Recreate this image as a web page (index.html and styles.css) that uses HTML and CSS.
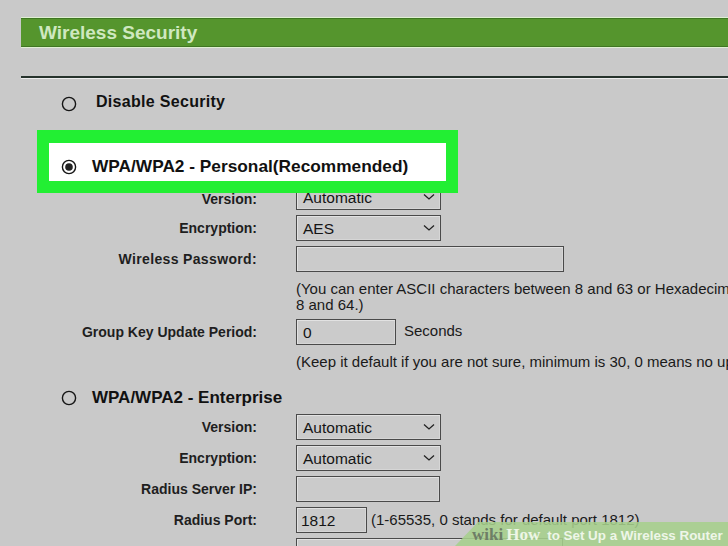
FILE: index.html
```html
<!DOCTYPE html>
<html>
<head>
<meta charset="utf-8">
<link rel="stylesheet" href="styles.css">
</head>
<body>
<div class="page">
  <div class="titlebar">Wireless Security</div>
  <div class="rule"></div>

  <div class="option opt-disable">
    <svg class="radio" width="16" height="16" viewBox="0 0 16 16"><circle cx="8" cy="8" r="6.6" fill="none" stroke="#151515" stroke-width="1.4"/></svg>
    <span class="opt-text small">Disable Security</span>
  </div>

  <div class="highlight">
    <div class="highlight-inner option">
      <svg class="radio" width="16" height="16" viewBox="0 0 16 16"><circle cx="8" cy="8" r="6.6" fill="#fff" stroke="#151515" stroke-width="1.4"/><circle cx="8" cy="8" r="3.8" fill="#222"/></svg>
      <span class="opt-text">WPA/WPA2 - Personal(Recommended)</span>
    </div>
  </div>

  <div class="form">
    <div class="row"><div class="label lbl-under">Version:</div><div class="ctrl"><div class="field sel w145">Automatic<svg class="chev" width="12" height="8" viewBox="0 0 12 8"><polyline points="1,1.5 6,6 11,1.5" fill="none" stroke="#222" stroke-width="1.3"/></svg></div></div></div>
    <div class="row"><div class="label">Encryption:</div><div class="ctrl"><div class="field sel w145">AES<svg class="chev" width="12" height="8" viewBox="0 0 12 8"><polyline points="1,1.5 6,6 11,1.5" fill="none" stroke="#222" stroke-width="1.3"/></svg></div></div></div>
    <div class="row"><div class="label wide">Wireless Password:</div><div class="ctrl"><div class="field w268"></div></div></div>
    <div class="note note1">(You can enter ASCII characters between 8 and 63 or Hexadecimal characters between<br>8 and 64.)</div>
    <div class="row gk"><div class="label">Group Key Update Period:</div><div class="ctrl"><div class="field w100">0</div><span class="suffix">Seconds</span></div></div>
    <div class="note note2">(Keep it default if you are not sure, minimum is 30, 0 means no update)</div>
  </div>

  <div class="option opt-ent">
    <svg class="radio" width="16" height="16" viewBox="0 0 16 16"><circle cx="8" cy="8" r="6.6" fill="none" stroke="#151515" stroke-width="1.4"/></svg>
    <span class="opt-text">WPA/WPA2 - Enterprise</span>
  </div>

  <div class="form form-ent">
    <div class="row"><div class="label">Version:</div><div class="ctrl"><div class="field sel w145">Automatic<svg class="chev" width="12" height="8" viewBox="0 0 12 8"><polyline points="1,1.5 6,6 11,1.5" fill="none" stroke="#222" stroke-width="1.3"/></svg></div></div></div>
    <div class="row"><div class="label">Encryption:</div><div class="ctrl"><div class="field sel w145">Automatic<svg class="chev" width="12" height="8" viewBox="0 0 12 8"><polyline points="1,1.5 6,6 11,1.5" fill="none" stroke="#222" stroke-width="1.3"/></svg></div></div></div>
    <div class="row"><div class="label">Radius Server IP:</div><div class="ctrl"><div class="field w144"></div></div></div>
    <div class="row"><div class="label">Radius Port:</div><div class="ctrl"><div class="field w71 port">1812</div><span class="suffix port-note">(1-65535, 0 stands for default port 1812)</span></div></div>
    <div class="row"><div class="label"></div><div class="ctrl"><div class="field w267"></div></div></div>
  </div>

  <div class="watermark">
    <svg class="wm-band" width="273" height="24" viewBox="0 0 273 24"><polygon points="0,24 23,0 273,0 273,24" fill="#a6cf8c" fill-opacity="0.88"/></svg>
    <div class="wm-text"><span class="wm-wiki">wiki</span><span class="wm-how">How</span><span class="wm-rest">to Set Up a Wireless Router</span></div>
  </div>
</div>
</body>
</html>
```
FILE: styles.css
```css
html, body {
  margin: 0;
  padding: 0;
}
body {
  background: #c9c9c9;
  width: 728px;
  height: 546px;
  overflow: hidden;
  font-family: "Liberation Sans", Arial, sans-serif;
  color: #1a1a1a;
}
.page {
  position: relative;
  width: 728px;
  height: 546px;
  overflow: hidden;
  padding-top: 18px;
  box-sizing: border-box;
}
.titlebar {
  margin-left: 21px;
  height: 27px;
  background: #55952d;
  border-top: 1px solid #3f7622;
  border-bottom: 1px solid #3f7622;
  box-shadow: 0 -1px 0 #dff0d2, 0 1px 0 #dff0d2;
  color: #cfe8c0;
  font-weight: bold;
  font-size: 19px;
  line-height: 28px;
  padding-left: 18px;
  white-space: nowrap;
}
.rule {
  margin-top: 29px;
  margin-left: 21px;
  height: 2px;
  background: #26332c;
  border-bottom: 1px solid #ececec;
}
.option {
  display: flex;
  align-items: center;
  white-space: nowrap;
}
.radio {
  flex: none;
  display: block;
}
.opt-text {
  font-weight: bold;
  font-size: 17px;
  color: #111;
}
.opt-text.small {
  font-size: 16px;
  letter-spacing: 0.3px;
}
.opt-disable {
  margin-top: 15px;
  height: 20px;
  padding-left: 61px;
  gap: 19px;
}
.opt-disable .opt-text {
  position: relative;
  top: -2px;
}
.highlight {
  position: relative;
  z-index: 2;
  margin-top: 16px;
  margin-left: 37px;
  width: 397px;
  border: 12px solid #22ef33;
  border-top-width: 13px;
  margin-bottom: -9px;
}
.highlight-inner {
  background: #fff;
  height: 38px;
  box-sizing: border-box;
  padding-left: 12px;
  padding-top: 10px;
  gap: 15px;
}
.highlight-inner .opt-text {
  font-size: 17.3px;
  position: relative;
  top: -1px;
}
.form {
  display: flex;
  flex-direction: column;
}
.row {
  display: grid;
  grid-template-columns: 257px 1fr;
  column-gap: 39px;
  align-items: center;
  height: 26px;
  margin-bottom: 5px;
  white-space: nowrap;
}
.label {
  text-align: right;
  font-weight: bold;
  font-size: 14px;
  color: #1e1e1e;
}
.label.wide {
  letter-spacing: 0.35px;
}
.lbl-under {
  position: relative;
  top: 2px;
}
.ctrl {
  display: flex;
  align-items: center;
  gap: 8px;
}
.field {
  box-sizing: border-box;
  height: 26px;
  border: 1px solid #4a4a4a;
  box-shadow: inset 1px 1px 0 #e2e2e2, inset -1px -1px 0 #d6d6d6;
  background: #cbcbcb;
  font-size: 15.5px;
  line-height: 25px;
  padding-left: 6px;
  color: #151515;
  position: relative;
  flex: none;
}
.sel .chev {
  position: absolute;
  right: 5px;
  top: 8px;
}
.w145 { width: 145px; }
.w144 { width: 144px; }
.w268 { width: 268px; }
.w267 { width: 267px; }
.w100 { width: 100px; }
.w71 { width: 71px; }
.port { padding-left: 4px; }
.suffix {
  font-size: 15px;
  color: #1a1a1a;
  position: relative;
  top: -2px;
}
.port-note {
  margin-left: -4px;
  top: -1px;
}
.note {
  margin-left: 296px;
  font-size: 15px;
  line-height: 16px;
  white-space: nowrap;
  color: #1a1a1a;
}
.note1 {
  margin-top: 4px;
}
.gk {
  margin-top: 6px;
}
.note2 {
  margin-top: 4px;
}
.opt-ent {
  margin-top: 18px;
  height: 20px;
  padding-left: 61px;
  gap: 15px;
}
.form-ent {
  margin-top: 6px;
}
.watermark {
  position: absolute;
  left: 455px;
  top: 522px;
  width: 273px;
  height: 24px;
  z-index: 5;
}
.wm-band {
  position: absolute;
  left: 0;
  top: 0;
  display: block;
}
.wm-text {
  position: absolute;
  left: 17px;
  top: 3px;
  white-space: nowrap;
  line-height: 20px;
}
.wm-wiki {
  font-family: "Liberation Serif", "Times New Roman", serif;
  font-weight: bold;
  font-size: 17px;
  color: #6e7e66;
}
.wm-how {
  font-family: "Liberation Serif", "Times New Roman", serif;
  font-weight: bold;
  font-size: 17px;
  color: #edf6e6;
  margin-left: 3px;
  margin-right: 7px;
}
.wm-rest {
  font-family: "Liberation Sans", Arial, sans-serif;
  font-weight: bold;
  font-size: 13.4px;
  color: #eef6e8;
}
```
